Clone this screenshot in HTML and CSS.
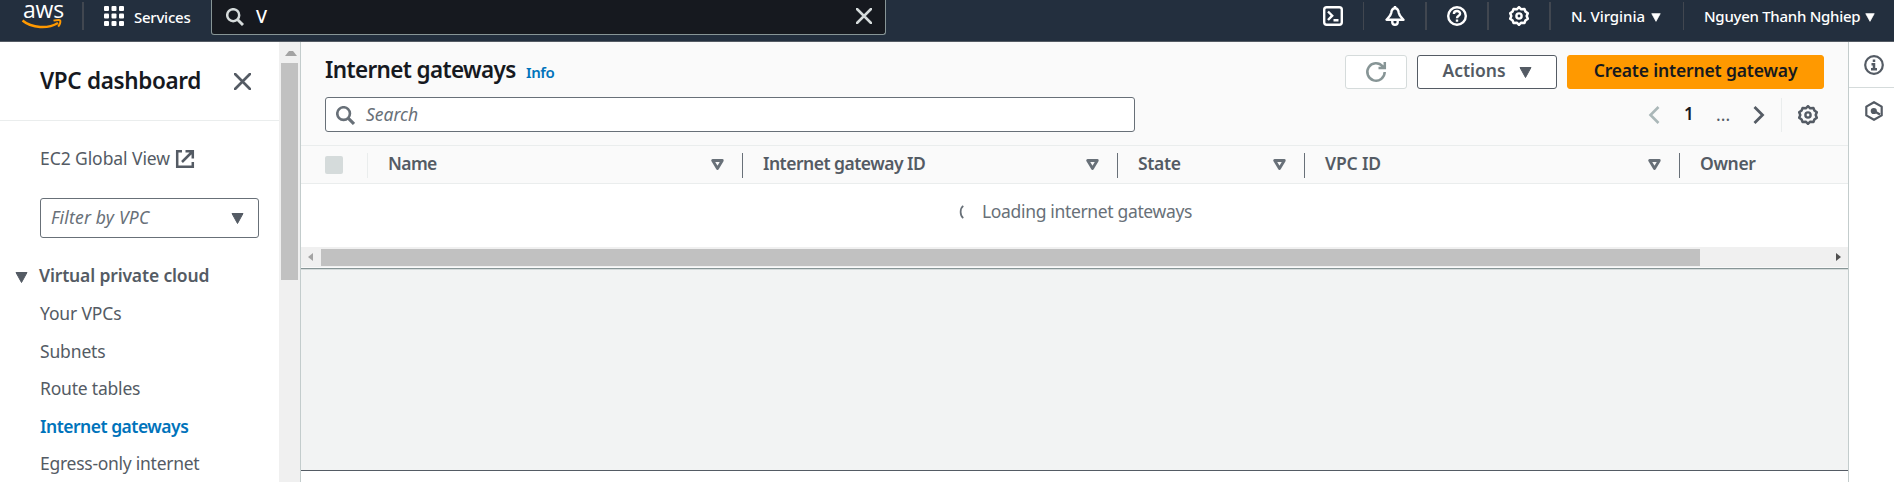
FILE: index.html
```html
<!DOCTYPE html>
<html lang="en">
<head>
<meta charset="utf-8">
<title>Internet gateways | VPC Console</title>
<link rel="stylesheet" href="styles.css">
</head>
<body>
<svg class="defs" width="0" height="0">
  <symbol id="caret" viewBox="0 0 13 11"><path d="M1 .5h11L6.500 10.500z" fill="currentColor" stroke="currentColor" stroke-linejoin="round"/></symbol>
  <symbol id="sort" viewBox="0 0 13 11"><path d="M1.700 1.500h9.600L6.500 9.500z" fill="none" stroke="currentColor" stroke-width="2.800" stroke-linejoin="round"/></symbol>
  <symbol id="gear" viewBox="0 0 20 20"><path d="M10 1.200 12.200 3.300 15.400 2.900 16.400 5.500 18.800 7.300 17.700 10 18.800 12.700 16.400 14.500 15.400 17.100 12.200 16.700 10 18.800 7.800 16.700 4.600 17.100 3.600 14.500 1.200 12.700 2.300 10 1.200 7.300 3.600 5.500 4.600 2.900 7.800 3.300z" fill="none" stroke="currentColor" stroke-width="2.500" stroke-linejoin="round"/><circle cx="10" cy="10" r="2.600" fill="none" stroke="currentColor" stroke-width="2.400"/></symbol>
  <symbol id="search" viewBox="0 0 18 18"><circle cx="7.200" cy="7.200" r="6" fill="none" stroke="currentColor" stroke-width="2.500"/><path d="M11.500 11.500 17 17" stroke="currentColor" stroke-width="2.900"/></symbol>
  <symbol id="close" viewBox="0 0 16 16"><path d="M1 1 15 15M15 1 1 15" stroke="currentColor" stroke-width="2.500" stroke-linecap="round"/></symbol>
</svg>

<header class="topbar">
  <div class="brand">
    <span class="brand-name">aws</span>
    <svg class="smile" viewBox="0 0 40 10"><path d="M.5 1.500C10 9.500 26 10 36 4" fill="none" stroke="#ff9900" stroke-width="2.400"/><path d="M31.500 1.700C35 .8 38 .8 38.300 1.500 38.600 3 38 5.500 36.200 7.700" fill="none" stroke="#ff9900" stroke-width="1.900"/></svg>
  </div>
  <div class="services">
    <svg class="i20" viewBox="0 0 20 20" fill="#fff"><rect width="5" height="5" rx="1"/><rect x="7.500" width="5" height="5" rx="1"/><rect x="15" width="5" height="5" rx="1"/><rect y="7.500" width="5" height="5" rx="1"/><rect x="7.500" y="7.500" width="5" height="5" rx="1"/><rect x="15" y="7.500" width="5" height="5" rx="1"/><rect y="15" width="5" height="5" rx="1"/><rect x="7.500" y="15" width="5" height="5" rx="1"/><rect x="15" y="15" width="5" height="5" rx="1"/></svg>
    <span class="top-text services-text">Services</span>
  </div>
  <div class="global-search">
    <svg class="i18"><use href="#search"/></svg>
    <span class="query">V</span>
    <svg class="i16"><use href="#close"/></svg>
  </div>
  <nav class="tools">
    <div class="tool"><svg class="i20" viewBox="0 0 20 20" fill="none" stroke="#fff" stroke-width="2.400"><rect x="1.200" y="1.200" width="17.600" height="17.600" rx="2.500"/><path d="M5 5.500 9.200 9.700 5 14M10.500 14.300h5"/></svg></div>
    <div class="tool"><svg class="i20" viewBox="0 0 20 20" fill="none" stroke="#fff" stroke-width="2.400" stroke-linejoin="round"><path d="M10 2.200C7.500 2.200 6.500 4.500 6.200 7 5.800 9.500 4 11 1.500 13.700H18.500C16 11 14.200 9.500 13.800 7 13.500 4.500 12.500 2.200 10 2.200zM10 0v3"/><path d="M7.300 14v2.300C7.300 19.600 12.700 19.600 12.700 16.300V14"/></svg></div>
    <div class="tool"><svg class="i20" viewBox="0 0 20 20" fill="none" stroke="#fff" stroke-width="2.400"><circle cx="10" cy="10" r="8.800"/><path d="M6.900 8C6.900 4 13.100 4.200 13.100 7.700 13.100 9.900 10 9.600 10 12.200M10 13.400v2.300"/></svg></div>
    <div class="tool"><svg class="i20"><use href="#gear"/></svg></div>
  </nav>
  <div class="region"><span class="top-text region-text">N. Virginia</span><svg class="caret-s"><use href="#caret"/></svg></div>
  <div class="account"><span class="top-text account-text">Nguyen Thanh Nghiep</span><svg class="caret-s"><use href="#caret"/></svg></div>
</header>

<div class="shell">
  <aside class="sidebar">
    <div class="side-body">
      <div class="side-head"><h2 class="side-title">VPC dashboard</h2><svg class="i17"><use href="#close"/></svg></div>
      <a class="global-view"><span class="gv-text">EC2 Global View</span><svg class="i18" viewBox="0 0 18 18" fill="none" stroke="currentColor" stroke-width="2.500"><path d="M6 1.200H1.200V16.800H16.800V12M9.500 1.200H16.800V8.500M16.500 1.500 6 12"/></svg></a>
      <div class="filter"><span class="filter-text">Filter by VPC</span><svg class="caret"><use href="#caret"/></svg></div>
      <div class="group"><svg class="caret"><use href="#caret"/></svg><span class="group-text">Virtual private cloud</span></div>
      <ul class="links">
        <li class="l-vpcs">Your VPCs</li>
        <li class="l-subnets">Subnets</li>
        <li class="l-routes">Route tables</li>
        <li class="active">Internet gateways</li>
        <li class="l-egress">Egress-only internet</li>
      </ul>
    </div>
    <div class="vscroll"><i class="arrow-up"></i><div class="vthumb"></div></div>
  </aside>

  <main class="main">
    <section class="panel">
      <div class="title-row">
        <h1 class="title">Internet gateways</h1><a class="info">Info</a>
        <div class="actions">
          <div class="btn refresh"><svg class="i20" viewBox="0 0 20 20" fill="none" stroke="currentColor" stroke-width="2.500"><path d="M18.700 10A8.700 8.700 0 1 1 16.500 4.200L18 6M18.800 0V6H12.500"/></svg></div>
          <div class="btn act"><span class="act-text">Actions</span><svg class="caret"><use href="#caret"/></svg></div>
          <div class="btn create"><span class="create-text">Create internet gateway</span></div>
        </div>
      </div>
      <div class="search-row">
        <div class="search-box"><svg class="i19"><use href="#search"/></svg><span class="search-text">Search</span></div>
        <div class="pager">
          <svg class="chev prev" viewBox="0 0 11 18"><path d="M10 1 2 9 10 17" fill="none" stroke="currentColor" stroke-width="2.600"/></svg>
          <b class="page">1</b><span class="dots">...</span>
          <svg class="chev" viewBox="0 0 11 18"><path d="M1 1 9 9 1 17" fill="none" stroke="currentColor" stroke-width="2.800"/></svg>
          <div class="prefs"><svg class="i20"><use href="#gear"/></svg></div>
        </div>
      </div>
      <div class="thead">
        <div class="th check"><i class="box"></i></div>
        <div class="th"><span class="t-name">Name</span><svg class="caret"><use href="#sort"/></svg></div>
        <div class="th"><span class="t-id">Internet gateway ID</span><svg class="caret"><use href="#sort"/></svg></div>
        <div class="th"><span class="t-state">State</span><svg class="caret"><use href="#sort"/></svg></div>
        <div class="th"><span class="t-vpc">VPC ID</span><svg class="caret"><use href="#sort"/></svg></div>
        <div class="th"><span class="t-owner">Owner</span></div>
      </div>
      <div class="loading"><svg class="spin" viewBox="0 0 5 16"><path d="M4.500 1C.5 4 .5 12 4.500 15" fill="none" stroke="currentColor" stroke-width="2"/></svg><span class="loading-text">Loading internet gateways</span></div>
      <div class="hscroll"><i class="arrow-left"></i><div class="hthumb"></div><i class="arrow-right"></i></div>
    </section>
    <section class="split"></section>
  </main>

  <aside class="rail">
    <div class="rail-item"><svg class="i20" viewBox="0 0 20 20" fill="none" stroke="currentColor" stroke-width="2.200"><circle cx="10" cy="10" r="8.800"/><path d="M10 4.500v2.400M7.500 9.300H10v5M7 14.300h6" stroke-width="2.500"/></svg></div>
    <div class="rail-item"><svg class="i20" viewBox="0 0 20 20" fill="none" stroke="currentColor" stroke-width="2.200" stroke-linejoin="round"><path d="M10 1.200 17.700 5.600V14.400L10 18.800 2.300 14.400V5.600z"/><circle cx="9.800" cy="10" r="2" fill="currentColor"/><path d="M10 10 16 13.500"/></svg></div>
  </aside>
</div>
</body>
</html>
```
FILE: styles.css
```css
* { box-sizing: border-box; }
body { margin: 0; width: 1894px; height: 482px; overflow: hidden; background: #fff; color: #545b64; font: 17.500px/24px "Noto Sans", "Open Sans", sans-serif; }
h1, h2, ul { margin: 0; padding: 0; list-style: none; }
svg { display: block; flex: none; overflow: visible; }
span, b, h1, h2, a, li { white-space: nowrap; }
.defs { position: absolute; }
.i16 { width: 16px; height: 16px; }
.i17 { width: 17px; height: 17px; }
.i18 { width: 18px; height: 18px; }
.i19 { width: 19px; height: 19px; }
.i20 { width: 20px; height: 20px; }
.caret { width: 13px; height: 11px; }
.caret-s { width: 10px; height: 9px; }

.topbar { display: flex; height: 42px; background: #232f3e; border-bottom: 1px solid #545b64; color: #fff; }
.brand { width: 84px; padding-left: 22px; margin: 2px 0 11px; border-right: 2px solid #414750; }
.brand-name { display: block; height: 17px; margin-left: 1px; font: 500 23px/14px "Open Sans", sans-serif; letter-spacing: -.2px; }
.smile { width: 40px; height: 10px; }
.services { display: flex; width: 127px; padding: 6px 0 0 20px; }
.top-text { font-size: 15px; line-height: 20px; font-weight: 500; }
.services-text { margin: 1px 0 0 10px; letter-spacing: -.25px; }
.global-search { display: flex; width: 675px; height: 35px; padding: 8px 13px 0 14px; background: #16191f; border: 1px solid #879596; border-top: 0; border-radius: 0 0 3px 3px; color: #d5dbdb; }
.query { flex: 1; margin: -4px 0 0 12px; color: #fff; font-size: 18px; font-weight: 500; }
.tools { display: flex; margin: 2px 0 11px 416px; }
.tool { display: flex; width: 62px; padding: 4px 0 0 20px; border-right: 2px solid #414750; }
.tool:first-child { padding-left: 21px; border-right-width: 1px; }
.tool:nth-child(2) { width: 63px; padding-left: 21px; }
.region { display: flex; width: 133px; margin: 2px 0 11px; padding: 5px 0 0 20px; border-right: 1px solid #414750; }
.region-text { width: 80px; letter-spacing: -.05px; }
.account { display: flex; padding: 7px 0 0 20px; }
.account-text { flex: none; width: 161px; letter-spacing: -.28px; }
.caret-s { margin-top: 6px; }
.region-text, .account-text { margin-top: -1px; }

.shell { display: flex; height: 440px; }
.sidebar { display: flex; width: 300px; }
.side-body { width: 279px; }
.side-head { display: flex; justify-content: space-between; align-items: center; height: 79px; padding: 0 28px 0 40px; border-bottom: 1px solid #eaeded; }
.side-title { margin-top: -1px; font-size: 22.500px; line-height: 30px; font-weight: 600; letter-spacing: -.34px; color: #16191f; }
.global-view { display: flex; height: 77px; padding: 25px 0 0 40px; }
.gv-text { width: 136px; letter-spacing: -.08px; }
.global-view .i18 { margin-top: 4px; }
.filter { display: flex; justify-content: space-between; align-items: center; width: 219px; height: 40px; margin-left: 40px; padding: 0 14px 2px 10px; border: 1px solid #687078; border-radius: 3px; }
.filter-text { font-style: italic; color: #687078; letter-spacing: .2px; }
.filter .caret { margin-top: 3px; }
.group { display: flex; height: 24px; margin: 26px 0 0 15px; font-weight: 600; letter-spacing: -.15px; }
.group .caret { margin-top: 8px; }
.group span { margin: -1px 0 0 11px; }
.links { margin-top: 7px; padding-left: 40px; line-height: 37.500px; letter-spacing: -.15px; }
.links .l-egress { letter-spacing: -.27px; }
.links .l-routes { letter-spacing: -.2px; }
.links .active { font-weight: 600; color: #0073bb; letter-spacing: -.5px; }
.vscroll { width: 21px; padding: 9px 3px 0 2px; background: #f0f0f0; }
.arrow-up { display: block; margin: 0 0 7px 4px; border: solid transparent; border-width: 0 4.500px 5px; border-bottom-color: #a3a3a3; }
.vthumb { width: 17px; height: 217px; background: #c1c1c1; }

.main { width: 1549px; border: solid #c3cccc; border-width: 0 1px; }
.panel { height: 227px; background: #fafafa; border-bottom: 1px solid #879596; }
.title-row { display: flex; height: 55px; padding: 13px 24px 0; }
.title { width: 201px; font-size: 22.500px; line-height: 30px; font-weight: 600; letter-spacing: -.64px; color: #16191f; }
.info { margin-top: 6px; color: #0073bb; font-size: 15px; line-height: 22px; font-weight: 600; letter-spacing: -.4px; }
.actions { display: flex; gap: 10px; margin-left: auto; }
.btn { display: flex; align-items: center; justify-content: center; height: 34px; border: 1px solid #545b64; border-radius: 3px; background: #fff; font-weight: 600; }
.refresh { width: 62px; border-color: #d5dbdb; color: #879596; }
.act { width: 140px; gap: 13px; }
.act span, .create span { margin-top: -4px; }
.create { width: 257px; background: #ff9900; border-color: #ff9900; color: #16191f; letter-spacing: -.16px; }
.search-row { display: flex; height: 48px; padding-left: 24px; }
.search-box { display: flex; width: 810px; height: 35px; padding: 8px 10px; background: #fff; border: 1px solid #687078; border-radius: 3px; color: #687078; }
.search-text { margin: -4px 0 0 11px; font-style: italic; }
.pager { display: flex; margin-left: 513px; padding-top: 1px; }
.chev { width: 12px; height: 18px; margin-top: 8px; }
.prev { color: #aab7b8; }
.page { width: 32px; margin: 4px 0 0 24px; font-size: 17px; color: #16191f; font-weight: 600; }
.dots { width: 37px; margin-top: 4px; }
.prefs { margin-left: 16px; padding: 7px 0 0 16px; height: 34px; border-left: 1px solid #eaeded; }
.thead { display: grid; grid-template-columns: 67px 375px 375px 187px 375px 1fr; height: 39px; padding: 7px 0 5px; border: solid #eaeded; border-width: 1px 0; font-weight: 600; }
.th { display: flex; justify-content: space-between; padding: 0 18px 0 20px; border-right: 1px solid #687078; height: 25px; color: #545b64; letter-spacing: -.35px; }
.th span { margin-top: -2px; }
.th .t-id { letter-spacing: -.51px; }
.th .t-name { letter-spacing: -.6px; }
.th .t-vpc { letter-spacing: -.15px; }
.th .caret { margin-top: 6px; color: #687078; }
.th.check { padding: 3px 0 0 24px; border-color: #eaeded; }
.th:last-child { border: 0; }
.box { width: 18px; height: 18px; background: #d5dbdb; border-radius: 2px; }
.loading { display: flex; height: 63px; padding: 15px 0 0 658px; background: #fff; color: #687078; }
.loading-text { letter-spacing: -.34px; }
.spin { width: 5px; height: 14px; margin: 6px 18px 0 0; }
.hscroll { display: flex; align-items: center; height: 20px; padding: 0 7px; background: #f0f0f0; }
.hthumb { width: 1379px; height: 17px; background: #c1c1c1; margin: 0 136px 0 8px; }
.arrow-left { border: solid transparent; border-width: 4.500px 5px 4.500px 0; border-right-color: #a3a3a3; }
.arrow-right { border: solid transparent; border-width: 4.500px 0 4.500px 5px; border-left-color: #505050; }
.split { height: 202px; background: #f2f3f3; border-top: 1px solid #d5dbdb; border-bottom: 1px solid #545b64; }
.rail { flex: 1; background: #fff; }
.rail-item { display: flex; height: 46px; padding: 13px 0 0 15px; border-bottom: 1px solid #d5dbdb; }
.rail-item + .rail-item { border: 0; }
```
